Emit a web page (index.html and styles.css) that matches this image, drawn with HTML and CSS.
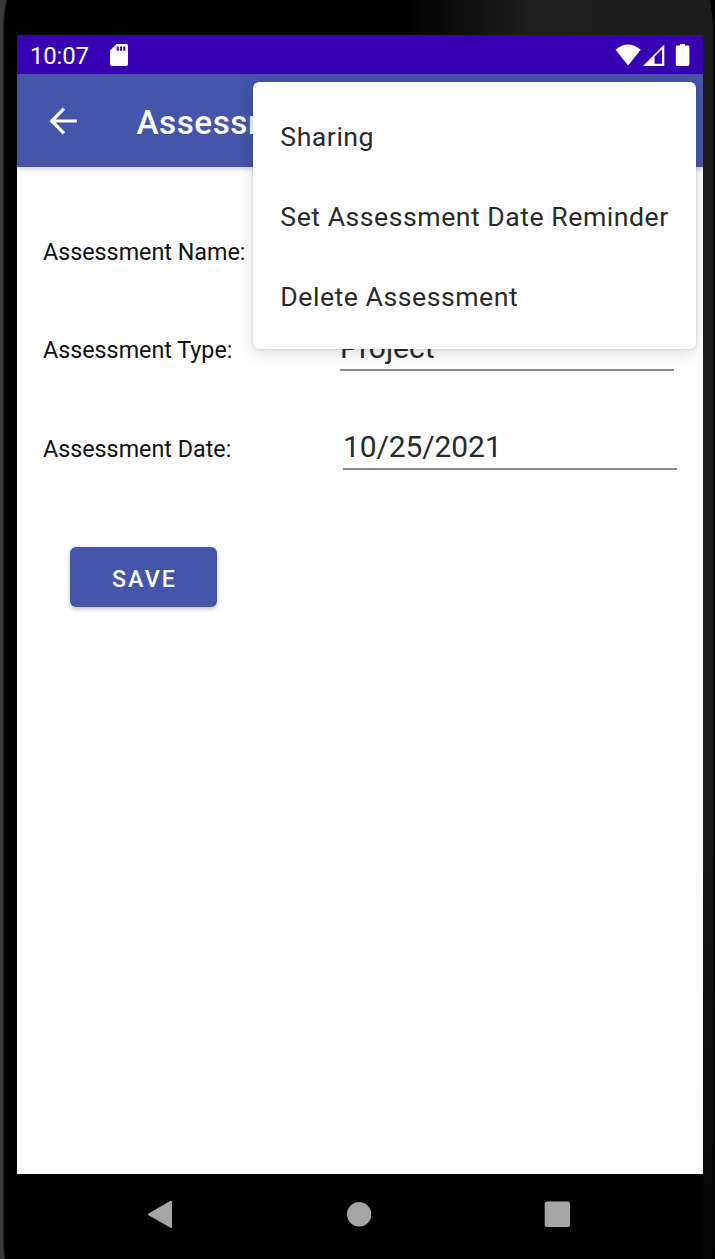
FILE: index.html
```html
<!DOCTYPE html>
<html lang="en">
<head>
<meta charset="utf-8">
<title>Assessment</title>
<link rel="stylesheet" href="styles.css">
</head>
<body>
<div class="device">
  <div class="screen">
    <header class="status">
      <span class="clock">10:07</span>
      <svg class="sd" width="18" height="22" viewBox="0 0 18 22"><path fill="#fff" fill-rule="evenodd" d="M6.500 0H16a2 2 0 0 1 2 2v18a2 2 0 0 1-2 2H2a2 2 0 0 1-2-2V6.500zM6.700 2.500v4.300h2v-4.300zM10 2.500v4.300h2v-4.300zM13.300 2.500v4.300h2v-4.300z"/></svg>
      <svg class="signals" width="75" height="23" viewBox="0 0 75 23">
        <path fill="#fff" d="M0.500 5.800Q13-5 25.700 5.800L13.100 21.500z"/>
        <path fill="#fff" fill-rule="evenodd" d="M28 22L49.300 .500V22zM39.500 12.500V19.800H47V5.300z"/>
        <path fill="#fff" d="M65 0h5v1.500h3a1.400 1.400 0 0 1 1.400 1.400V20.600a1.400 1.400 0 0 1-1.400 1.400H62.200a1.400 1.400 0 0 1-1.400-1.400V2.900a1.400 1.400 0 0 1 1.400-1.400H65z"/>
      </svg>
    </header>
    <div class="toolbar">
      <svg class="back" width="28" height="28" viewBox="0 0 28 28"><path fill="none" stroke="#fff" stroke-width="3.200" d="M27.800 14H3M15 1.700L2.700 14L15 26.300"/></svg>
      <h1 class="title">Assessment</h1>
    </div>
    <main class="form">
      <div class="row"><span class="label">Assessment Name:</span></div>
      <div class="row"><span class="label">Assessment Type:</span><span class="field type">Project</span></div>
      <div class="row"><span class="label">Assessment Date:</span><span class="field date">10/25/2021</span></div>
      <button class="save">SAVE</button>
    </main>
    <nav class="menu">
      <div class="item">Sharing</div>
      <div class="item">Set Assessment Date Reminder</div>
      <div class="item">Delete Assessment</div>
    </nav>
  </div>
  <footer class="navbar">
    <svg width="26" height="28" viewBox="0 0 26 28"><path fill="#a5a5a5" stroke="#a5a5a5" stroke-width="2" stroke-linejoin="round" d="M2 14.300L24 1.700V27z"/></svg>
    <svg width="26" height="28" viewBox="0 0 26 28"><circle cx="14.200" cy="14.300" r="12.200" fill="#a5a5a5"/></svg>
    <svg width="26" height="28" viewBox="0 0 26 28"><rect x=".7" y="1.400" width="25.300" height="25.600" rx="2" fill="#a5a5a5"/></svg>
  </footer>
</div>
</body>
</html>
```
FILE: styles.css
```css
* { box-sizing: border-box; }
body { margin: 0; background: #000; font-family: Roboto, sans-serif; }
.device {
  position: relative;
  z-index: 0;
  width: 715px;
  height: 1259px;
  padding: 35px 12px 0 17px;
  overflow: hidden;
  background: linear-gradient(90deg, #393939 0 20px, #000 20px);
}
/* Glass front with rounded corners inside the metal rim */
.device::before {
  content: "";
  position: absolute;
  z-index: -1;
  inset: -20px 2px -30px 3px;
  border-left: 1px solid #1a1a1a;
  border-radius: 16px / 52px;
  background:
    linear-gradient(#1c1c1c 60%, #080808 92%) right 55px / 10px 1260px no-repeat,
    linear-gradient(90deg, #000 56%, #1e1e1e 74%, #1c1c1c) 0 0 / 100% 55px no-repeat,
    #000;
}
.screen { position: relative; width: 686px; height: 1139px; background: #fff; overflow: hidden; }
.status { display: flex; align-items: flex-start; height: 39px; padding: 8.500px 13px 0 13px; background: #3700b3; color: #fff; }
.clock { width: 80px; font-size: 24px; line-height: 24px; letter-spacing: -.2px; }
.signals { margin-left: auto; }
.toolbar {
  display: flex;
  align-items: center;
  height: 93px;
  padding: 0 0 0 32px;
  background: #4455aa;
  box-shadow: 0 2px 5px rgba(0, 0, 0, .2);
}
.title { margin: 4px 0 0 59.500px; color: #fff; font-size: 33.300px; font-weight: 500; letter-spacing: .5px; line-height: 40px; }
.form { padding: 35px 26px 0 26px; }
.row { display: flex; align-items: flex-start; height: 98.500px; }
.label { width: 297px; margin-top: 34.500px; font-size: 23.300px; line-height: 30px; color: #111; }
.field { width: 334px; height: 55px; margin-top: 15.500px; padding-top: 14px; border-bottom: 2px solid #8a8a8a; font-size: 30px; line-height: 36px; color: #2a2a2a; }
.date { margin: 16px 0 0 3px; padding-top: 13.500px; letter-spacing: -.1px; }
.save {
  display: block;
  width: 147px;
  height: 60px;
  margin: 49.500px 0 0 27px;
  padding: 3px 0 0 2px;
  border: 0;
  border-radius: 6px;
  background: #4455aa;
  box-shadow: 0 2px 4px rgba(0, 0, 0, .25);
  color: #fff;
  font: 500 23.300px/30px Roboto, sans-serif;
  letter-spacing: 2.080px;
}
.menu {
  position: absolute;
  left: 236.300px;
  top: 46.500px;
  width: 442.700px;
  height: 267px;
  padding: 14px 0 0 27px;
  border-radius: 6px;
  background: #fff;
  box-shadow: 0 4px 16px rgba(0, 0, 0, .14), 0 0 3px rgba(0, 0, 0, .16);
}
.item { height: 80px; font-size: 26.670px; line-height: 82px; letter-spacing: .51px; color: #2a2a2a; white-space: nowrap; }
.navbar { display: flex; justify-content: space-between; padding: 26px 133px 0 129.500px; }
```
